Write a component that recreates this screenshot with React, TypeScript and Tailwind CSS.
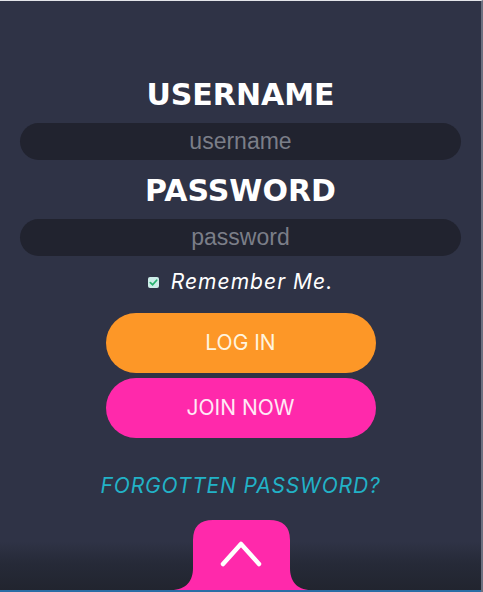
import { useState } from "react"

function TabShape() {
  return (
    <svg width="140" height="70" viewBox="0 0 140 70" className="block">
      <path
        d="M0 70 C16 70 22 60 22 48 L22 20 Q22 0 42 0 L98 0 Q119 0 119 20 L119 48 C119 60 125 70 140 70 Z"
        fill="#ff29ab"
      />
      <path d="M52 44 L70 24 L88 44" fill="none" stroke="#ffffff" strokeWidth="4.5" strokeLinecap="round" strokeLinejoin="round" />
    </svg>
  )
}

export default function App() {
  const [remember, setRemember] = useState(true)

  return (
    <main className="flex h-[592px] w-full flex-col overflow-hidden border-t border-[#e4e5ea] border-r-2 border-r-[#6c7080] bg-[#2f3346] font-['Inter',sans-serif]">
      <div className="flex flex-col items-center px-5 pt-[76px]">
        <h2 className="h-9 text-[30px] font-bold leading-9 text-white font-['DejaVu_Sans',sans-serif]">USERNAME</h2>
        <input
          type="text"
          placeholder="username"
          className="mt-[10px] h-[37px] w-full rounded-full bg-[#21232f] text-center text-[23px] text-white outline-none placeholder:text-[#7b7e88] font-['Liberation_Sans',sans-serif]"
        />
        <h2 className="mt-[13px] h-9 text-[30px] font-bold leading-9 text-white font-['DejaVu_Sans',sans-serif]">PASSWORD</h2>
        <input
          type="password"
          placeholder="password"
          className="mt-[10px] h-[37px] w-full rounded-full bg-[#21232f] text-center text-[23px] text-white outline-none placeholder:text-[#7b7e88] font-['Liberation_Sans',sans-serif]"
        />
        <label className="mt-[14px] flex h-6 items-center gap-3 text-[21px] italic tracking-[0.05em] text-white">
          <span
            onClick={() => setRemember(!remember)}
            className="flex h-[11px] w-[11px] items-center justify-center rounded-[2px] bg-[#cdeee9]"
          >
            {remember && (
              <svg width="9" height="9" viewBox="0 0 10 10">
                <path d="M1.5 5.2 L4 7.5 L8.5 2.5" fill="none" stroke="#27b36f" strokeWidth="2" strokeLinecap="round" />
              </svg>
            )}
          </span>
          Remember Me.
        </label>
        <button className="mt-[19px] h-[60px] w-[270px] rounded-full bg-[#fd9727] text-[21px] text-[#fff4df]">LOG IN</button>
        <button className="mt-[5px] h-[60px] w-[270px] rounded-full bg-[#ff29ab] text-[21px] text-[#ffeaf6]">JOIN NOW</button>
        <a className="mt-[36px] flex h-6 items-center text-[21px] italic tracking-[0.04em] text-[#22b2c7]">FORGOTTEN PASSWORD?</a>
      </div>
      <div className="mt-auto flex flex-col bg-linear-to-b from-[#2f3346] from-30% via-[#262a38] via-60% to-[#21242e]">
        <div className="flex justify-center">
          <TabShape />
        </div>
        <div className="h-[2px] bg-[#2a6ea6]" />
      </div>
    </main>
  )
}
